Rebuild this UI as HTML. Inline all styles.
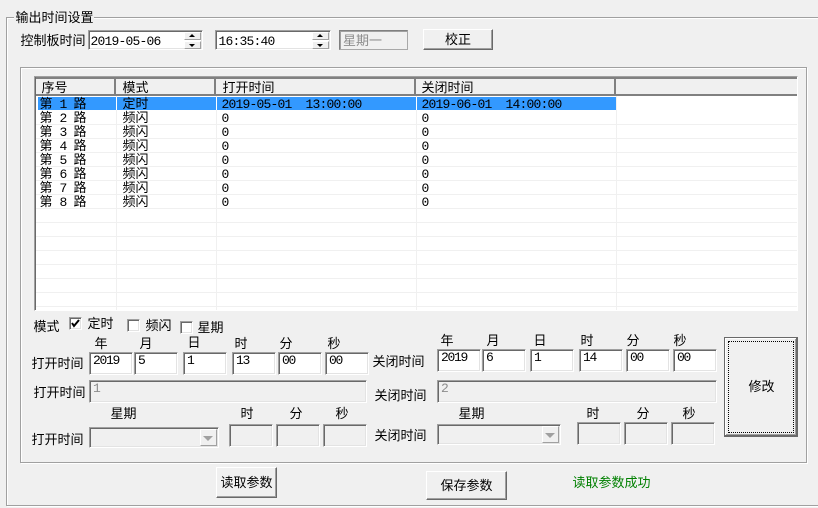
<!DOCTYPE html>
<html><head><meta charset="utf-8"><style>
html,body{margin:0;padding:0;width:818px;height:508px;overflow:hidden;background:#f0f0f0}
body{position:relative;font:13px/14px "WenQuanYi Zen Hei","Noto Sans CJK SC",sans-serif;color:#000}
div,i{position:absolute;box-sizing:border-box;font-style:normal}
.t{white-space:nowrap;margin-left:-.5px}
b{font:13px/14px "Liberation Mono",monospace;letter-spacing:-.8px}
.g{border:1px solid #a0a0a0;box-shadow:1px 1px 0 #fff,inset 1px 1px 0 #fff}
.e{background:#fff;border:1px solid;border-color:#a0a0a0 #fff #fff #a0a0a0;box-shadow:inset 1px 1px 0 #696969,inset -1px -1px 0 #e3e3e3;padding:1px 0 0 3px;font:13px/14px "Liberation Mono",monospace;letter-spacing:-1.3px}
.d{background:#f0f0f0;color:#8c8c8c}
.btn{background:#f0f0f0;border:1px solid;border-color:#fff #696969 #696969 #fff;box-shadow:inset -1px -1px 0 #a0a0a0;text-align:center}
.h{background:#f0f0f0;border-bottom:2px solid #808080;border-right:2px solid #808080;border-top:2px solid #808080;top:77px;height:19px}
.v{top:96px;width:1px;height:214px;background:#f0f0f0}
.l{left:36px;width:761px;height:1px;background:#f0f0f0}
.c{border:1px solid;border-color:#a0a0a0 #fff #fff #a0a0a0;background:#fff;box-shadow:inset 1px 1px 0 #696969,inset -1px -1px 0 #e3e3e3}
.s{width:17px;height:8px;background:#f0f0f0;border:1px solid;border-color:#fff #a0a0a0 #a0a0a0 #fff}
.up,.dn,.ar{width:0;height:0;border-left:3px solid transparent;border-right:3px solid transparent}
.up{border-bottom:3px solid #000}
.dn{border-top:3px solid #000}
.ar{border-left-width:5px;border-right-width:5px;border-top:5px solid #a0a0a0}
</style></head><body>
<div class="g" style="left:6px;top:17px;width:830px;height:489px"></div>
<div class="t" style="left:14px;top:10px;width:80px;height:14px;background:#f0f0f0;padding-left:2px">输出时间设置</div>

<div class="t" style="left:21px;top:33px">控制板时间</div>
<div class="c" style="left:88px;top:30px;width:115px;height:20px"></div>
<div class="t" style="left:91px;top:33px"><b>2019-05-06</b></div>
<div class="s" style="left:184px;top:32px"></div><div class="s" style="left:184px;top:41px"></div>
<i class="up" style="left:189px;top:34px"></i><i class="dn" style="left:189px;top:44px"></i>
<div class="c" style="left:215px;top:30px;width:116px;height:20px"></div>
<div class="t" style="left:219px;top:33px"><b>16:35:40</b></div>
<div class="s" style="left:312px;top:32px"></div><div class="s" style="left:312px;top:41px"></div>
<i class="up" style="left:317px;top:34px"></i><i class="dn" style="left:317px;top:44px"></i>
<div style="left:339px;top:30px;width:69px;height:20px;padding:2px 0 0 3px;background:#f0f0f0;color:#8c8c8c;border:1px solid;border-color:#808080 #a8a8a8 #a8a8a8 #808080;box-shadow:inset 1px 1px 0 #a0a0a0">星期一</div>
<div class="btn" style="left:423px;top:29px;width:70px;height:21px;line-height:18px">校正</div>

<div class="g" style="left:20px;top:67px;width:787px;height:396px"></div>

<div style="left:34px;top:76px;width:764px;height:235px;background:#fff;border:1px solid;border-color:#a0a0a0 #fff #fff #a0a0a0;box-shadow:inset 1px 1px 0 #696969"></div>
<div class="h" style="left:36px;width:80px"></div>
<div class="h" style="left:116px;width:100px"></div>
<div class="h" style="left:216px;width:200px"></div>
<div class="h" style="left:416px;width:200px"></div>
<div class="h" style="left:616px;width:181px;border-right:0"></div>
<div class="t" style="left:42px;top:80px">序号</div>
<div class="t" style="left:123px;top:80px">模式</div>
<div class="t" style="left:223px;top:80px">打开时间</div>
<div class="t" style="left:422px;top:80px">关闭时间</div>

<div class="v" style="left:116px"></div><div class="v" style="left:216px"></div><div class="v" style="left:416px"></div><div class="v" style="left:616px"></div>
<div class="l" style="top:124px"></div><div class="l" style="top:138px"></div><div class="l" style="top:152px"></div><div class="l" style="top:166px"></div><div class="l" style="top:180px"></div><div class="l" style="top:194px"></div><div class="l" style="top:208px"></div><div class="l" style="top:222px"></div><div class="l" style="top:236px"></div><div class="l" style="top:250px"></div><div class="l" style="top:264px"></div><div class="l" style="top:278px"></div><div class="l" style="top:292px"></div><div class="l" style="top:306px"></div>
<div style="left:38px;top:97px;width:578px;height:13px;background:#3399ff"></div>
<div class="v" style="left:116px;top:97px;height:13px;background:#fff"></div><div class="v" style="left:216px;top:97px;height:13px;background:#fff"></div><div class="v" style="left:416px;top:97px;height:13px;background:#fff"></div>

<div class="t" style="left:40px;top:96px;white-space:pre">第<b> 1 </b>路</div><div class="t" style="left:123px;top:96px">定时</div><div class="t" style="left:222px;top:96px;white-space:pre"><b>2019-05-01  13:00:00</b></div><div class="t" style="left:422px;top:96px;white-space:pre"><b>2019-06-01  14:00:00</b></div>
<div class="t" style="left:40px;top:110px;white-space:pre">第<b> 2 </b>路</div><div class="t" style="left:123px;top:110px">频闪</div><div class="t" style="left:222px;top:110px"><b>0</b></div><div class="t" style="left:422px;top:110px"><b>0</b></div>
<div class="t" style="left:40px;top:124px;white-space:pre">第<b> 3 </b>路</div><div class="t" style="left:123px;top:124px">频闪</div><div class="t" style="left:222px;top:124px"><b>0</b></div><div class="t" style="left:422px;top:124px"><b>0</b></div>
<div class="t" style="left:40px;top:138px;white-space:pre">第<b> 4 </b>路</div><div class="t" style="left:123px;top:138px">频闪</div><div class="t" style="left:222px;top:138px"><b>0</b></div><div class="t" style="left:422px;top:138px"><b>0</b></div>
<div class="t" style="left:40px;top:152px;white-space:pre">第<b> 5 </b>路</div><div class="t" style="left:123px;top:152px">频闪</div><div class="t" style="left:222px;top:152px"><b>0</b></div><div class="t" style="left:422px;top:152px"><b>0</b></div>
<div class="t" style="left:40px;top:166px;white-space:pre">第<b> 6 </b>路</div><div class="t" style="left:123px;top:166px">频闪</div><div class="t" style="left:222px;top:166px"><b>0</b></div><div class="t" style="left:422px;top:166px"><b>0</b></div>
<div class="t" style="left:40px;top:180px;white-space:pre">第<b> 7 </b>路</div><div class="t" style="left:123px;top:180px">频闪</div><div class="t" style="left:222px;top:180px"><b>0</b></div><div class="t" style="left:422px;top:180px"><b>0</b></div>
<div class="t" style="left:40px;top:194px;white-space:pre">第<b> 8 </b>路</div><div class="t" style="left:123px;top:194px">频闪</div><div class="t" style="left:222px;top:194px"><b>0</b></div><div class="t" style="left:422px;top:194px"><b>0</b></div>

<div class="t" style="left:34px;top:319px">模式</div>
<div class="c" style="left:69px;top:317px;width:13px;height:13px"></div>
<svg style="position:absolute;left:69px;top:317px" width="13" height="13"><path d="M3 6l2 3 5-6" fill="none" stroke="#000" stroke-width="2"/></svg>
<div class="t" style="left:88px;top:316px">定时</div>
<div class="c" style="left:127px;top:319px;width:13px;height:13px"></div>
<div class="t" style="left:146px;top:318px">频闪</div>
<div class="c" style="left:180px;top:321px;width:13px;height:13px"></div>
<div class="t" style="left:198px;top:320px">星期</div>

<div class="t" style="left:95px;top:336px">年</div><div class="t" style="left:140px;top:336px">月</div><div class="t" style="left:188px;top:335px">日</div><div class="t" style="left:235px;top:336px">时</div><div class="t" style="left:280px;top:336px">分</div><div class="t" style="left:328px;top:336px">秒</div>
<div class="t" style="left:32px;top:356px">打开时间</div>
<div class="e" style="left:89px;top:352px;width:44px;height:23px">2019</div>
<div class="e" style="left:134px;top:352px;width:44px;height:23px">5</div>
<div class="e" style="left:183px;top:352px;width:44px;height:23px">1</div>
<div class="e" style="left:232px;top:352px;width:44px;height:23px">13</div>
<div class="e" style="left:278px;top:352px;width:44px;height:23px">00</div>
<div class="e" style="left:325px;top:352px;width:44px;height:23px">00</div>

<div class="t" style="left:373px;top:354px">关闭时间</div>
<div class="t" style="left:441px;top:333px">年</div><div class="t" style="left:487px;top:333px">月</div><div class="t" style="left:534px;top:333px">日</div><div class="t" style="left:581px;top:333px">时</div><div class="t" style="left:627px;top:333px">分</div><div class="t" style="left:674px;top:333px">秒</div>
<div class="e" style="left:437px;top:349px;width:44px;height:23px">2019</div>
<div class="e" style="left:482px;top:349px;width:44px;height:23px">6</div>
<div class="e" style="left:530px;top:349px;width:44px;height:23px">1</div>
<div class="e" style="left:579px;top:349px;width:44px;height:23px">14</div>
<div class="e" style="left:626px;top:349px;width:44px;height:23px">00</div>
<div class="e" style="left:673px;top:349px;width:44px;height:23px">00</div>

<div class="t" style="left:34px;top:385px">打开时间</div>
<div class="e d" style="left:89px;top:380px;width:278px;height:23px">1</div>
<div class="t" style="left:375px;top:388px">关闭时间</div>
<div class="e d" style="left:437px;top:380px;width:280px;height:23px">2</div>

<div class="t" style="left:111px;top:406px">星期</div><div class="t" style="left:241px;top:406px">时</div><div class="t" style="left:290px;top:406px">分</div><div class="t" style="left:336px;top:406px">秒</div>
<div class="t" style="left:459px;top:406px">星期</div><div class="t" style="left:587px;top:406px">时</div><div class="t" style="left:637px;top:406px">分</div><div class="t" style="left:683px;top:406px">秒</div>

<div class="t" style="left:32px;top:432px">打开时间</div>
<div class="e d" style="left:89px;top:427px;width:130px;height:21px"></div>
<div class="s" style="left:200px;top:429px;height:17px"></div><i class="ar" style="left:203px;top:436px"></i>
<div class="e d" style="left:229px;top:424px;width:44px;height:23px"></div>
<div class="e d" style="left:276px;top:424px;width:44px;height:23px"></div>
<div class="e d" style="left:323px;top:424px;width:44px;height:23px"></div>

<div class="t" style="left:375px;top:428px">关闭时间</div>
<div class="e d" style="left:437px;top:424px;width:124px;height:21px"></div>
<div class="s" style="left:542px;top:426px;height:17px"></div><i class="ar" style="left:545px;top:433px"></i>
<div class="e d" style="left:577px;top:422px;width:44px;height:23px"></div>
<div class="e d" style="left:624px;top:422px;width:44px;height:23px"></div>
<div class="e d" style="left:671px;top:422px;width:44px;height:23px"></div>

<div style="left:724px;top:337px;width:74px;height:100px;background:#f0f0f0;border:1px solid;border-color:#696969;border-right-width:2px;border-bottom-width:2px;box-shadow:inset 1px 1px 0 #fff,inset -1px -1px 0 #a0a0a0"></div>
<div style="left:728px;top:341px;width:66px;height:92px;border:1px dotted #000"></div>
<div class="t" style="left:749px;top:379px">修改</div>

<div class="btn" style="left:216px;top:467px;width:61px;height:31px;line-height:28px">读取参数</div>
<div class="btn" style="left:426px;top:471px;width:81px;height:29px;line-height:26px">保存参数</div>
<div class="t" style="left:573px;top:475px;color:#008000">读取参数成功</div>
</body></html>
